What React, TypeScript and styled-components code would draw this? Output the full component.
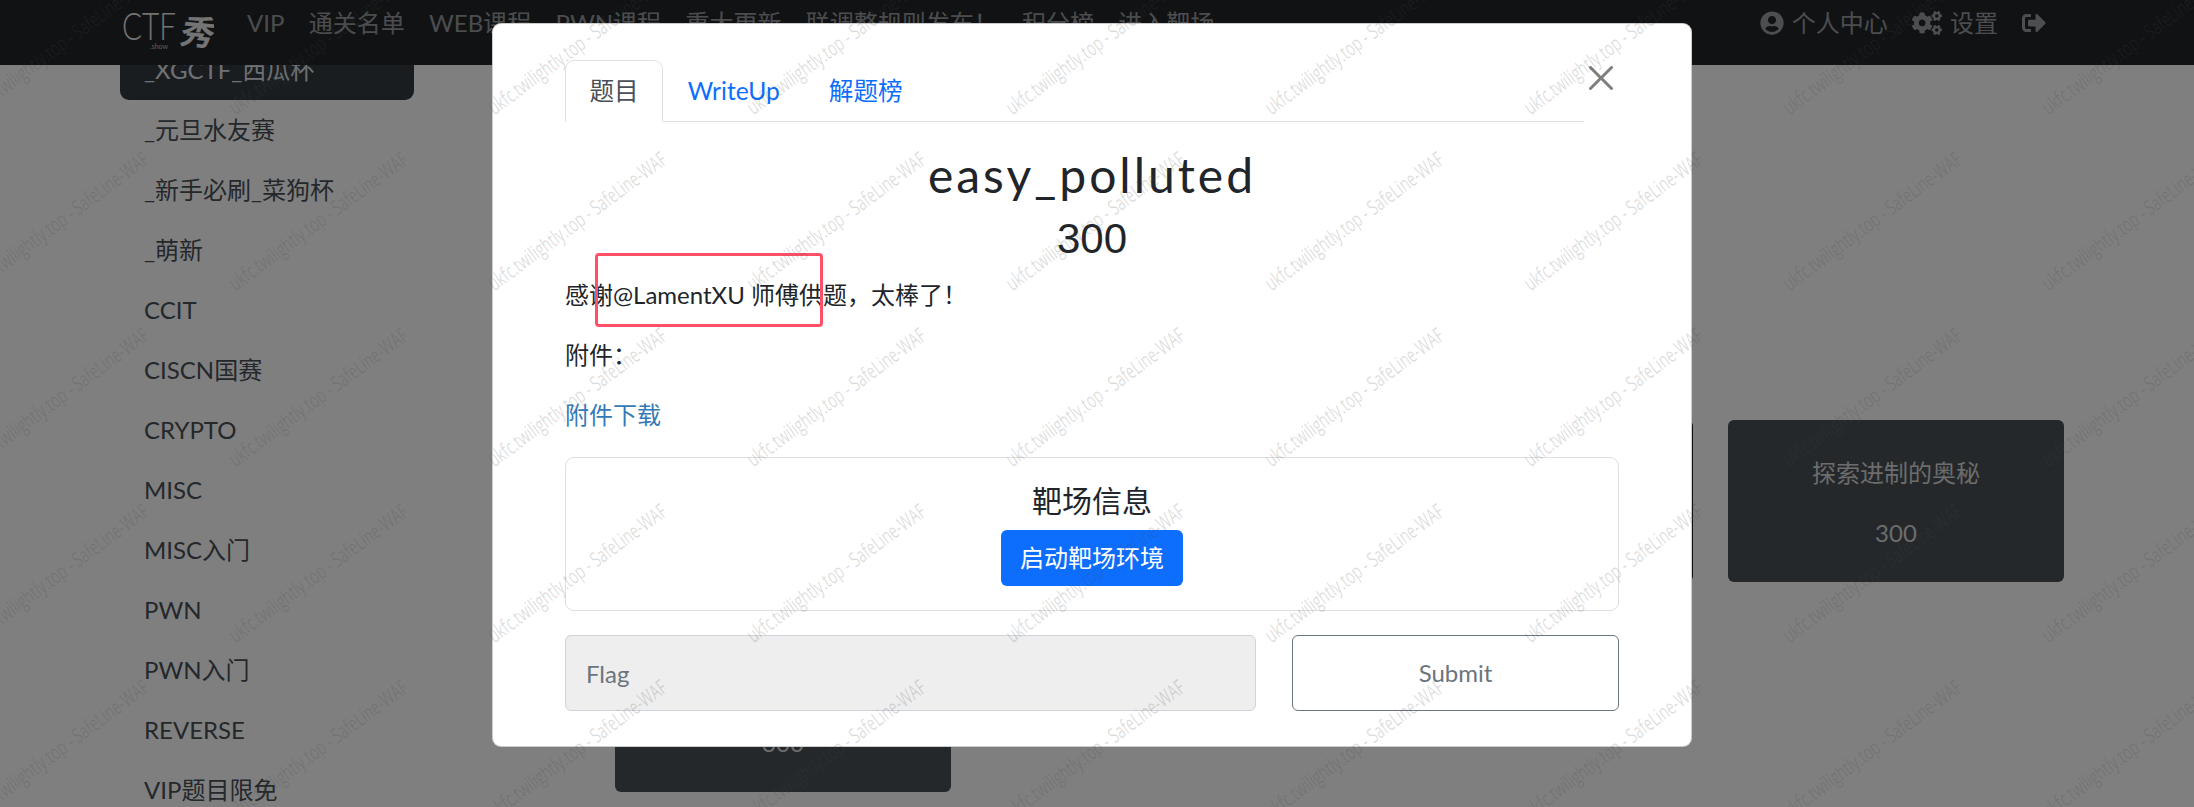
import React from "react";
import styled, { createGlobalStyle } from "styled-components";
import { FaUserCircle, FaCogs, FaSignOutAlt } from "react-icons/fa";

const GlobalStyle = createGlobalStyle`
  html, body {
    margin: 0;
    padding: 0;
    background: #fff;
  }
  * {
    box-sizing: border-box;
  }
  body {
    font-family: Lato, "Noto Sans CJK SC", sans-serif;
    font-size: 24px;
    line-height: 36px;
    color: #212529;
  }
`;

const navLinks = ["VIP", "通关名单", "WEB课程", "PWN课程", "重大更新", "联调整规则发布！", "积分榜", "进入靶场"];

const categories = [
  "_XGCTF_西瓜杯",
  "_元旦水友赛",
  "_新手必刷_菜狗杯",
  "_萌新",
  "CCIT",
  "CISCN国赛",
  "CRYPTO",
  "MISC",
  "MISC入门",
  "PWN",
  "PWN入门",
  "REVERSE",
  "VIP题目限免",
];

const challenges = [
  { title: "", score: "300" },
  { title: "", score: "300" },
  { title: "", score: "300", solved: true },
  { title: "探索进制的奥秘", score: "300" },
  { title: "", score: "300" },
];

const watermarks = Array.from({ length: 45 }, (_, i) => i);

export default function App() {
  return (
    <Page>
      <GlobalStyle />
      <Navbar>
        <Logo viewBox="0 0 92 44" aria-label="CTF.show">
          <text x="0" y="31" fontFamily="Lato" fontWeight="300" fontSize="37" fill="#e6e6e6" textLength="54" lengthAdjust="spacingAndGlyphs">
            CTF
          </text>
          <text x="28" y="40" fontFamily="Lato" fontSize="7" fill="#bbbbbb">
            .show
          </text>
          <text x="0" y="0" fontFamily="Noto Sans CJK SC" fontWeight="700" fontSize="34" fill="#e8e8e8" transform="translate(56 34) rotate(5) skewX(-10)">
            秀
          </text>
        </Logo>
        <NavList>
          {navLinks.map((link) => (
            <NavLink key={link}>{link}</NavLink>
          ))}
        </NavList>
        <NavRight>
          <NavLink>
            <FaUserCircle /> 个人中心
          </NavLink>
          <NavLink>
            <GearIcon /> 设置
          </NavLink>
          <NavLink>
            <FaSignOutAlt />
          </NavLink>
        </NavRight>
      </Navbar>

      <Main>
        <Sidebar>
          {categories.map((name, i) => (
            <SideItem key={name} $active={i === 0}>
              {name}
            </SideItem>
          ))}
        </Sidebar>
        <CardGrid>
          {challenges.map((c, i) => (
            <Card key={i} $solved={c.solved}>
              <CardTitle>{c.title}</CardTitle>
              <div>{c.score}</div>
            </Card>
          ))}
        </CardGrid>
      </Main>

      <Backdrop />

      <Dialog>
        <ModalContent>
          <ModalHeader>
            <Tabs>
              <Tab $active>题目</Tab>
              <Tab>WriteUp</Tab>
              <Tab>解题榜</Tab>
            </Tabs>
            <CloseButton viewBox="0 0 16 16" aria-label="Close">
              <path d="M.293.293a1 1 0 0 1 1.414 0L8 6.586 14.293.293a1 1 0 1 1 1.414 1.414L9.414 8l6.293 6.293a1 1 0 0 1-1.414 1.414L8 9.414l-6.293 6.293a1 1 0 0 1-1.414-1.414L6.586 8 .293 1.707a1 1 0 0 1 0-1.414z" />
            </CloseButton>
          </ModalHeader>
          <Title>easy_polluted</Title>
          <Score>300</Score>
          <Paragraph>
            感谢@LamentXU 师傅供题，太棒了！
            <Highlight />
          </Paragraph>
          <Paragraph>附件：</Paragraph>
          <Paragraph>
            <Attachment>附件下载</Attachment>
          </Paragraph>
          <RangePanel>
            <RangeTitle>靶场信息</RangeTitle>
            <StartButton>启动靶场环境</StartButton>
          </RangePanel>
          <FlagForm>
            <FlagInput placeholder="Flag" disabled />
            <SubmitButton>Submit</SubmitButton>
          </FlagForm>
        </ModalContent>
      </Dialog>

      <WatermarkLayer>
        {watermarks.map((i) => (
          <Watermark key={i}>ukfc.twilightly.top - SafeLine-WAF</Watermark>
        ))}
      </WatermarkLayer>
    </Page>
  );
}

const Page = styled.div`
  position: relative;
  width: 2194px;
  height: 807px;
  overflow: hidden;
  background: #fff;
`;

const Navbar = styled.nav`
  position: relative;
  z-index: 2;
  display: flex;
  height: 65px;
  padding: 5px 146px 0 122px;
  background: #212529;
`;

const Logo = styled.svg`
  width: 92px;
  height: 44px;
  margin: 4px 33px 0 0;
  flex: none;
`;

const NavList = styled.div`
  display: flex;
  gap: 24.3px;
`;

const NavRight = styled(NavList)`
  gap: 24px;
  margin-left: auto;
`;

const NavLink = styled.a`
  display: block;
  height: 36px;
  color: rgba(255, 255, 255, 0.55);
  white-space: nowrap;

  svg {
    margin-right: 2px;
    vertical-align: -3px;
  }
`;

const GearIcon = styled(FaCogs)`
  width: 30px;
  height: 24px;
`;

const Main = styled.div`
  display: flex;
  margin-top: -25px;
  padding-left: 120px;
`;

const Sidebar = styled.div`
  width: 294px;
  flex: none;
`;

const SideItem = styled.div<{ $active?: boolean }>`
  height: 60px;
  padding: 12px 24px;
  border-radius: 9px;
  white-space: nowrap;
  color: ${(p) => (p.$active ? "#dee2e6" : "#495057")};
  background: ${(p) => (p.$active ? "#343a40" : "transparent")};
`;

const CardGrid = styled.div`
  display: grid;
  grid-template-columns: repeat(4, 336px);
  grid-auto-rows: 162px;
  gap: 48px 35px;
  margin-left: 201px;
  padding-top: 380px;
`;

const Card = styled.div<{ $solved?: boolean }>`
  padding-top: 35px;
  border-radius: 6px;
  text-align: center;
  color: #d8d8d8;
  background: ${(p) => (p.$solved ? "#212529" : "#495057")};
`;

const CardTitle = styled.div`
  height: 36px;
  margin-bottom: 24px;
`;

const Backdrop = styled.div`
  position: absolute;
  inset: 0;
  z-index: 3;
  background: rgba(0, 0, 0, 0.5);
`;

const Dialog = styled.div`
  position: absolute;
  inset: 0;
  z-index: 4;
  display: flex;
  justify-content: center;
  padding: 23px 10px 0 0;
`;

const ModalContent = styled.div`
  width: 1200px;
  height: 724px;
  padding: 36px 72px 0;
  overflow: hidden;
  background: #fff;
  border: 1px solid rgba(0, 0, 0, 0.2);
  border-radius: 9px;
`;

const ModalHeader = styled.div`
  display: flex;
  align-items: flex-start;
  margin-bottom: 26px;
`;

const Tabs = styled.div`
  display: flex;
  width: 1019px;
  height: 62px;
  border-bottom: 1.5px solid #dee2e6;
`;

const Tab = styled.a<{ $active?: boolean }>`
  height: 62px;
  padding: 12px 23.5px;
  font-size: 24.6px;
  color: ${(p) => (p.$active ? "#495057" : "#0d6efd")};
  background: ${(p) => (p.$active ? "#fff" : "transparent")};
  border: 1.5px solid ${(p) => (p.$active ? "#dee2e6" : "transparent")};
  border-bottom-color: ${(p) => (p.$active ? "#fff" : "transparent")};
  border-radius: 9px 9px 0 0;
`;

const CloseButton = styled.svg`
  width: 24px;
  height: 24px;
  margin: 6px 0 0 5px;
  fill: #000;
  opacity: 0.5;
`;

const Title = styled.div`
  height: 54px;
  font-size: 48px;
  line-height: 54px;
  letter-spacing: 3px;
  text-align: center;
`;

const Score = styled.div`
  height: 50px;
  margin: 12px 0 13px;
  font-family: "Liberation Sans", sans-serif;
  font-size: 42px;
  line-height: 50px;
  text-align: center;
`;

const Paragraph = styled.div`
  position: relative;
  height: 36px;
  margin-bottom: 24px;
`;

const Highlight = styled.div`
  position: absolute;
  left: 30px;
  top: -24px;
  width: 228px;
  height: 74px;
  border: 3px solid #ff5068;
  border-radius: 4px;
`;

const Attachment = styled.a`
  color: #337ab7;
`;

const RangePanel = styled.div`
  display: flex;
  flex-direction: column;
  align-items: center;
  height: 154px;
  padding-top: 24px;
  border: 1.5px solid #dfdfdf;
  border-radius: 9px;
`;

const RangeTitle = styled.div`
  height: 36px;
  margin-bottom: 12px;
  font-size: 30px;
  line-height: 36px;
`;

const StartButton = styled.button`
  height: 56px;
  padding: 0 19px;
  font: inherit;
  color: #fff;
  background: #0d6efd;
  border: 0;
  border-radius: 6px;
`;

const FlagForm = styled.div`
  display: flex;
  gap: 36px;
  margin-top: 24px;
`;

const FlagInput = styled.input`
  width: 691px;
  height: 76px;
  padding: 0 20px;
  font: inherit;
  background: #eeeeee;
  border: 1px solid #ced4da;
  border-radius: 6px;

  &::placeholder {
    color: #6c757d;
    opacity: 1;
  }
`;

const SubmitButton = styled.button`
  width: 327px;
  height: 76px;
  font: inherit;
  color: #6c757d;
  background: #fff;
  border: 1px solid #6c757d;
  border-radius: 6px;
`;

const WatermarkLayer = styled.div`
  position: absolute;
  top: 109px;
  left: -28px;
  z-index: 5;
  display: grid;
  grid-template-columns: repeat(9, 259px);
  grid-auto-rows: 176px;
  pointer-events: none;
`;

const Watermark = styled.span`
  display: block;
  justify-self: start;
  align-self: start;
  width: max-content;
  height: 21px;
  font-family: "Open Sans", sans-serif;
  font-size: 21px;
  line-height: 21px;
  white-space: nowrap;
  color: rgba(70, 70, 70, 0.19);
  transform-origin: 0 50%;
  transform: translateY(-10px) rotate(-36.5deg) scaleX(0.67);
`;
